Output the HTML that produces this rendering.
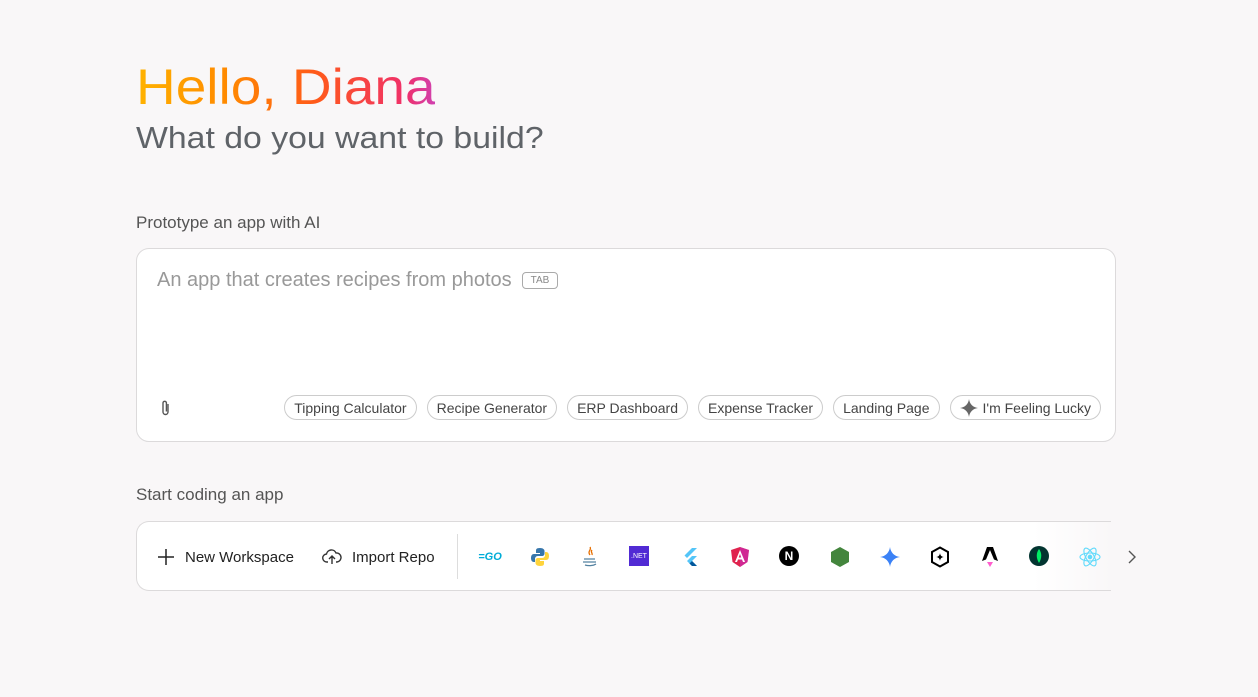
<!DOCTYPE html>
<html><head><meta charset="utf-8"><style>
*{box-sizing:border-box;margin:0;padding:0}
body{width:1258px;height:697px;background:#f9f7f8;font-family:"Liberation Sans",sans-serif;position:relative;overflow:hidden}
.h1{position:absolute;left:136px;top:57px;font-size:50px;line-height:60px;background:linear-gradient(90deg,#ffb300 0%,#ff8a00 30%,#ff5a1a 60%,#f0306a 90%,#d040b0 100%);-webkit-background-clip:text;background-clip:text;color:transparent;transform:scaleX(1.1);transform-origin:left}
.h2{position:absolute;left:136px;top:118px;font-size:31px;line-height:40px;color:#5f6368;transform:scaleX(1.09);transform-origin:left}
.lbl{position:absolute;left:136px;font-size:17px;color:#555}
.card{position:absolute;left:136px;width:980px;background:#fff;border:1px solid #dcdadb;border-radius:13px}
.ph{position:absolute;left:20px;top:20px;font-size:20px;color:#999}
.tab{display:inline-block;font-size:10px;border:1px solid #aaa;border-radius:4px;padding:2px 8px;color:#888;vertical-align:middle;margin-left:10px;position:relative;top:0px}
.chips{position:absolute;right:14px;top:146px;display:flex;gap:10px}
.chip{border:1px solid #ccc;border-radius:14px;padding:0 9px;height:25px;line-height:24px;font-size:14px;color:#444;white-space:nowrap;display:flex;align-items:center;gap:5px}
.ic{position:absolute;top:24px;width:22px;height:22px;margin-left:-11px;display:flex;align-items:center;justify-content:center}
.btn{position:absolute;top:24px;height:22px;font-size:15px;color:#222;display:flex;align-items:center;gap:10px}
</style></head><body>
<div class="h1">Hello, Diana</div>
<div class="h2">What do you want to build?</div>
<div class="lbl" style="top:213px">Prototype an app with AI</div>
<div class="card" style="top:248px;height:194px">
 <div class="ph">An app that creates recipes from photos<span class="tab">TAB</span></div>
 <svg style="position:absolute;left:22px;top:150px" width="14" height="18" viewBox="0 0 14 18" fill="none" stroke="#555" stroke-width="1.4"><path d="M9 5v8a2.5 2.5 0 0 1-5 0V4a1.7 1.7 0 0 1 3.4 0v8.5"/></svg>
 <div class="chips">
  <div class="chip">Tipping Calculator</div><div class="chip">Recipe Generator</div><div class="chip">ERP Dashboard</div><div class="chip">Expense Tracker</div><div class="chip">Landing Page</div>
  <div class="chip"><svg width="18" height="18" viewBox="0 0 20 20"><path d="M10 0C10.6 5.5 14.5 9.4 20 10 14.5 10.6 10.6 14.5 10 20 9.4 14.5 5.5 10.6 0 10 5.5 9.4 9.4 5.5 10 0Z" fill="#666"/></svg>I'm Feeling Lucky</div>
 </div>
</div>
<div class="lbl" style="top:485px">Start coding an app</div>
<div class="card" style="top:521px;height:70px;width:975px;border-right:none;border-radius:13px 0 0 13px;background:linear-gradient(90deg,#fff 92%,#f9f7f8 100%)">
 <div class="btn" style="left:20px"><svg width="18" height="18" viewBox="0 0 18 18" stroke="#222" stroke-width="1.5"><path d="M9 1v16M1 9h16"/></svg>New Workspace</div>
 <div class="btn" style="left:185px"><svg width="20" height="16" viewBox="0 0 20 16" fill="none" stroke="#333" stroke-width="1.4"><path d="M6 13H5a4 4 0 0 1-.5-8A5 5 0 0 1 14 4a4 4 0 0 1 1 9h-1M10 15V7M7 10l3-3 3 3"/></svg>Import Repo</div>
 <div style="position:absolute;left:320px;top:12px;width:1px;height:45px;background:#ddd"></div>
 <div class="ic" style="left:353px;font:bold italic 11px sans-serif;color:#00acd7">=GO</div>
 <div class="ic" style="left:403px"><svg width="20" height="20" viewBox="0 0 20 20"><path d="M10 1c-4 0-4 1.5-4 3v2h4v1H4c-2 0-3 1.5-3 4s1 4 3 4h1v-3c0-1.5 1-3 3-3h4c1.5 0 2.5-1 2.5-2.5V4c0-1.5-1.5-3-4.5-3z" fill="#3776ab"/><path d="M10 19c4 0 4-1.5 4-3v-2h-4v-1h6c2 0 3-1.5 3-4s-1-4-3-4h-1v3c0 1.5-1 3-3 3H8c-1.5 0-2.5 1-2.5 2.5V16c0 1.5 1.5 3 4.5 3z" fill="#ffd43b"/></svg></div>
 <div class="ic" style="left:453px"><svg width="18" height="22" viewBox="0 0 18 22" fill="none"><path d="M9 1c2 3-3 4 0 8M11 4c-2 2 1 3 0 5" stroke="#e76f00" stroke-width="1.3"/><path d="M3 13h11M2 16h13M4 19c3 1 8 1 11-1" stroke="#5382a1" stroke-width="1.3"/></svg></div>
 <div class="ic" style="left:503px;background:#512bd4;width:20px;height:20px;color:#fff;font-size:7px">.NET</div>
 <div class="ic" style="left:553px"><svg width="18" height="20" viewBox="0 0 18 20"><path d="M11 1h5L6 11 3.5 8.5z" fill="#54c5f8"/><path d="M11 9h5l-5 5 5 5h-5l-5-5z" fill="#54c5f8"/><path d="M8.5 16.5 11 19h5l-5-5z" fill="#01579b"/></svg></div>
 <div class="ic" style="left:603px"><svg width="20" height="22" viewBox="0 0 20 22"><path d="M10 1 19 4l-1.5 12L10 21 2.5 16 1 4z" fill="#e0234e"/><path d="M10 1 19 4l-1.5 12L10 21z" fill="#c42cc2" opacity=".6"/><path d="M10 4 5 16h2l1-2.5h4L13 16h2zM8.7 11.5 10 8l1.3 3.5z" fill="#fff"/></svg></div>
 <div class="ic" style="left:653px;width:20px;height:20px;border-radius:50%;background:#000;color:#fff;font-size:12px;font-weight:bold">N</div>
 <div class="ic" style="left:703px"><svg width="20" height="22" viewBox="0 0 20 22"><path d="M10 1l9 5v10l-9 5-9-5V6z" fill="#43853d"/></svg></div>
 <div class="ic" style="left:753px"><svg width="20" height="20" viewBox="0 0 20 20"><path d="M10 0C10.6 5.5 14.5 9.4 20 10 14.5 10.6 10.6 14.5 10 20 9.4 14.5 5.5 10.6 0 10 5.5 9.4 9.4 5.5 10 0Z" fill="#3b82f6"/></svg></div>
 <div class="ic" style="left:803px"><svg width="20" height="22" viewBox="0 0 20 22"><path d="M10 1.5l8 4.5v10l-8 4.5-8-4.5V6z" fill="none" stroke="#000" stroke-width="2"/><path d="M10 7c.3 2.5 1.5 3.7 4 4-2.5.3-3.7 1.5-4 4-.3-2.5-1.5-3.7-4-4 2.5-.3 3.7-1.5 4-4z" fill="#000"/></svg></div>
 <div class="ic" style="left:853px"><svg width="18" height="22" viewBox="0 0 18 22"><path d="M6 1h6l5 14-4-1.5L9 4 5 13.5 1 15z" fill="#000"/><path d="M6 16h6l-3 5z" fill="#ff5dcd"/></svg></div>
 <div class="ic" style="left:903px;width:20px;height:20px;border-radius:50%;background:#023430"><svg width="8" height="14" viewBox="0 0 8 14"><path d="M4 0C7 4 7 9 4 14 1 9 1 4 4 0z" fill="#00ed64"/></svg></div>
 <div class="ic" style="left:953px"><svg width="22" height="20" viewBox="0 0 22 20" fill="none" stroke="#61dafb" stroke-width="1.1"><ellipse cx="11" cy="10" rx="10" ry="4"/><ellipse cx="11" cy="10" rx="10" ry="4" transform="rotate(60 11 10)"/><ellipse cx="11" cy="10" rx="10" ry="4" transform="rotate(120 11 10)"/><circle cx="11" cy="10" r="1.8" fill="#61dafb"/></svg></div>
 <div class="ic" style="left:995px"><svg width="10" height="16" viewBox="0 0 10 16" fill="none" stroke="#555" stroke-width="1.4"><path d="M2 2l6 6-6 6"/></svg></div>
</div>
</body></html>
